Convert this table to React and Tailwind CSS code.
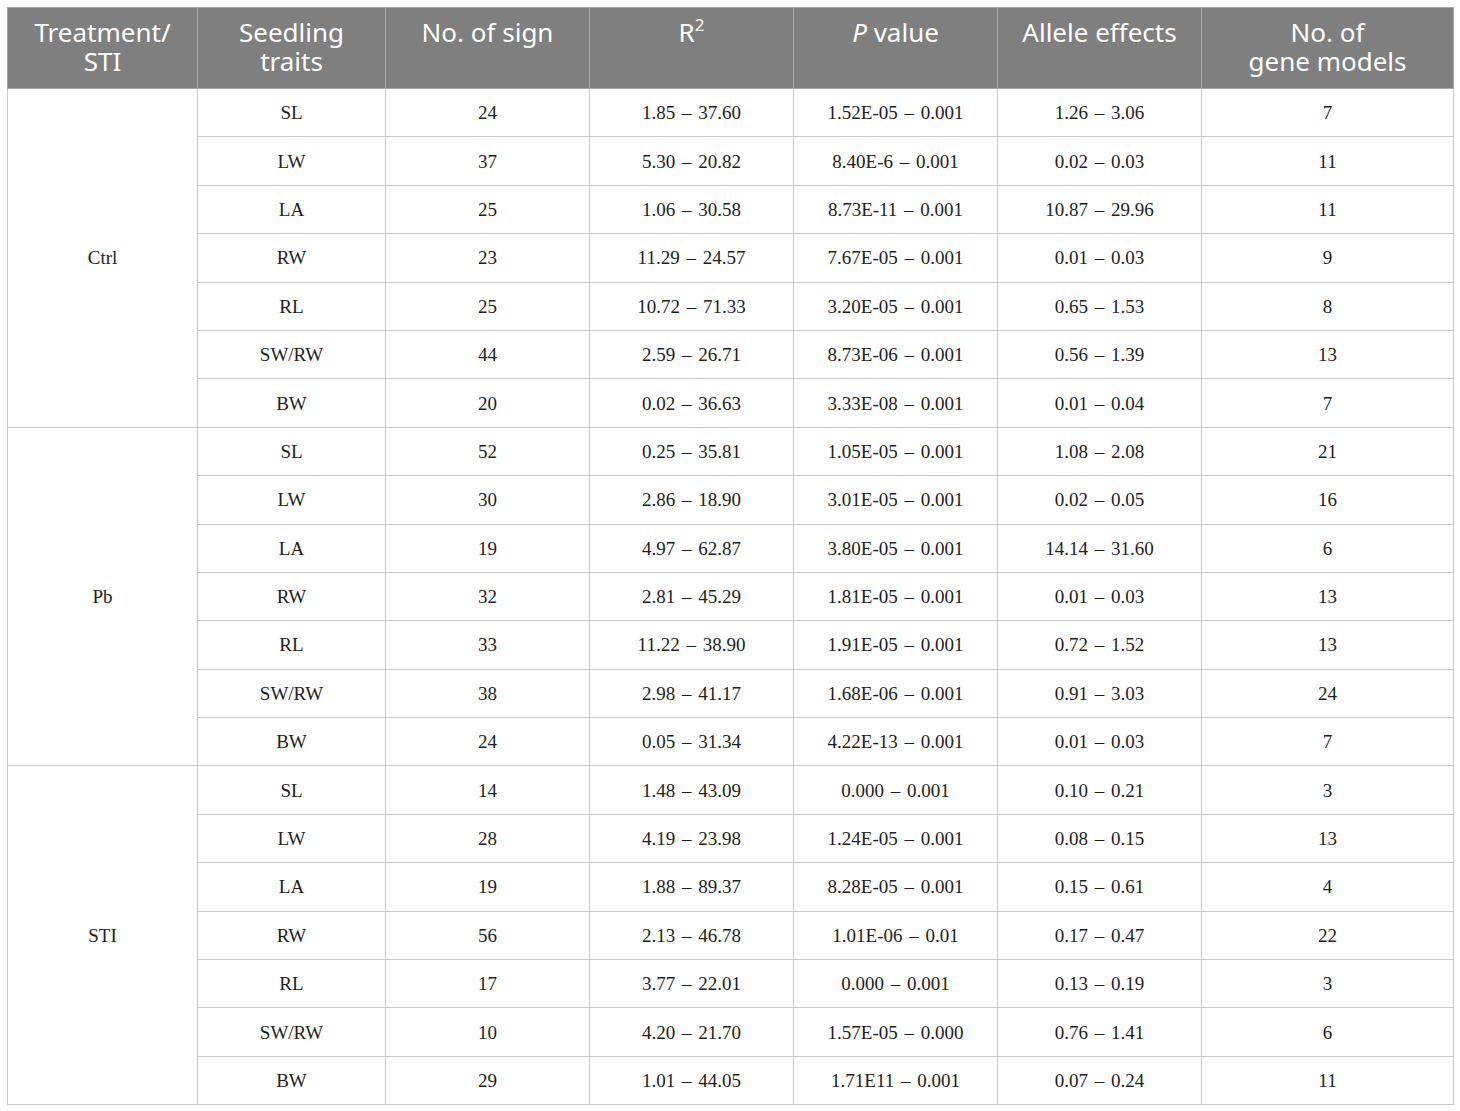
import React from "react";

const groups = [
  {
    name: "Ctrl",
    rows: [
      ["SL", "24", "1.85 – 37.60", "1.52E-05 – 0.001", "1.26 – 3.06", "7"],
      ["LW", "37", "5.30 – 20.82", "8.40E-6 – 0.001", "0.02 – 0.03", "11"],
      ["LA", "25", "1.06 – 30.58", "8.73E-11 – 0.001", "10.87 – 29.96", "11"],
      ["RW", "23", "11.29 – 24.57", "7.67E-05 – 0.001", "0.01 – 0.03", "9"],
      ["RL", "25", "10.72 – 71.33", "3.20E-05 – 0.001", "0.65 – 1.53", "8"],
      ["SW/RW", "44", "2.59 – 26.71", "8.73E-06 – 0.001", "0.56 – 1.39", "13"],
      ["BW", "20", "0.02 – 36.63", "3.33E-08 – 0.001", "0.01 – 0.04", "7"],
    ],
  },
  {
    name: "Pb",
    rows: [
      ["SL", "52", "0.25 – 35.81", "1.05E-05 – 0.001", "1.08 – 2.08", "21"],
      ["LW", "30", "2.86 – 18.90", "3.01E-05 – 0.001", "0.02 – 0.05", "16"],
      ["LA", "19", "4.97 – 62.87", "3.80E-05 – 0.001", "14.14 – 31.60", "6"],
      ["RW", "32", "2.81 – 45.29", "1.81E-05 – 0.001", "0.01 – 0.03", "13"],
      ["RL", "33", "11.22 – 38.90", "1.91E-05 – 0.001", "0.72 – 1.52", "13"],
      ["SW/RW", "38", "2.98 – 41.17", "1.68E-06 – 0.001", "0.91 – 3.03", "24"],
      ["BW", "24", "0.05 – 31.34", "4.22E-13 – 0.001", "0.01 – 0.03", "7"],
    ],
  },
  {
    name: "STI",
    rows: [
      ["SL", "14", "1.48 – 43.09", "0.000 – 0.001", "0.10 – 0.21", "3"],
      ["LW", "28", "4.19 – 23.98", "1.24E-05 – 0.001", "0.08 – 0.15", "13"],
      ["LA", "19", "1.88 – 89.37", "8.28E-05 – 0.001", "0.15 – 0.61", "4"],
      ["RW", "56", "2.13 – 46.78", "1.01E-06 – 0.01", "0.17 – 0.47", "22"],
      ["RL", "17", "3.77 – 22.01", "0.000 – 0.001", "0.13 – 0.19", "3"],
      ["SW/RW", "10", "4.20 – 21.70", "1.57E-05 – 0.000", "0.76 – 1.41", "6"],
      ["BW", "29", "1.01 – 44.05", "1.71E11 – 0.001", "0.07 – 0.24", "11"],
    ],
  },
];

const th =
  "border border-[#a9a9a9] align-top pt-[10px] px-2 font-normal text-white text-[26px] leading-[29px] text-center";
const td =
  "border border-[#c9c9c9] align-middle text-center text-[19px] leading-none text-[#1e1e1e] [word-spacing:2px]";

export default function App() {
  return (
    <div className="bg-white p-[7px] min-h-[1111px]">
      <table className="table-fixed border-collapse w-[1446px] border border-[#c9c9c9]">
        <colgroup>
          <col className="w-[190px]" />
          <col className="w-[188px]" />
          <col className="w-[204px]" />
          <col className="w-[204px]" />
          <col className="w-[204px]" />
          <col className="w-[204px]" />
          <col className="w-[252px]" />
        </colgroup>
        <thead>
          <tr className="h-[81px] bg-[#7f7f7f] font-['Noto_Sans',sans-serif]">
            <th className={th}>
              Treatment/
              <br />
              STI
            </th>
            <th className={th}>
              Seedling
              <br />
              traits
            </th>
            <th className={th}>No. of sign</th>
            <th className={th}>
              R<sup className="text-[17px] relative -top-[11px]">2</sup>
            </th>
            <th className={th}>
              <i>P</i> value
            </th>
            <th className={th}>Allele effects</th>
            <th className={th}>
              No. of
              <br />
              gene models
            </th>
          </tr>
        </thead>
        <tbody className="font-['Liberation_Serif',serif]">
          {groups.map((g) =>
            g.rows.map((r, i) => (
              <tr key={g.name + i} className="h-[48.4px]">
                {i === 0 && (
                  <td rowSpan={g.rows.length} className={td}>
                    {g.name}
                  </td>
                )}
                {r.map((c, j) => (
                  <td key={j} className={td}>
                    {c}
                  </td>
                ))}
              </tr>
            ))
          )}
        </tbody>
      </table>
    </div>
  );
}
